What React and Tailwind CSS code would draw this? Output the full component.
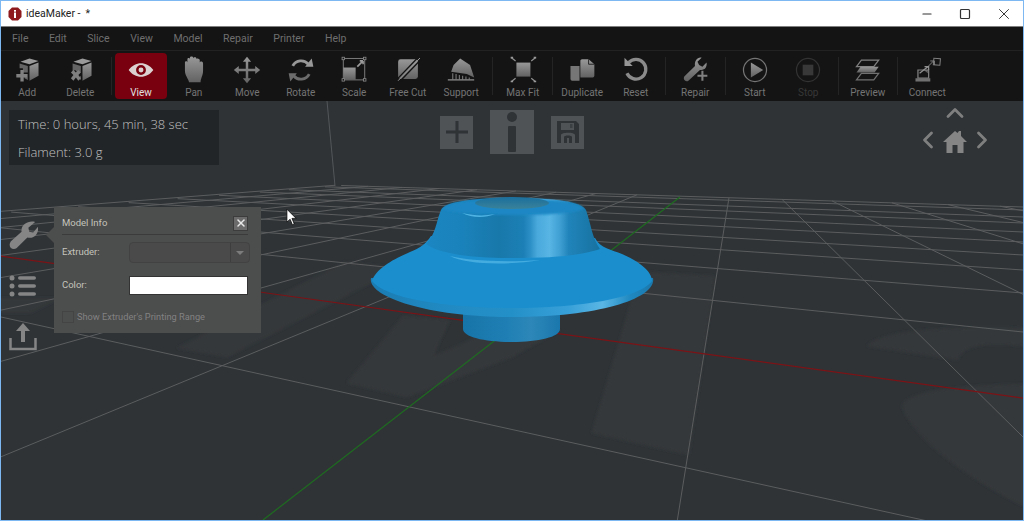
import { Minus, Square, X, ChevronUp, ChevronLeft, ChevronRight } from 'lucide-react';

const uiFont = { fontFamily: 'Roboto, "Open Sans", sans-serif' };

// floor grid, measured from the two vanishing points of the perspective
const VP_X = [-753, 151];
const VP_Y = [736, 154];
const rightEdgeYs = [207, 210, 217, 223, 232, 242, 255, 270, 293, 332, 542];
const farEdgeXs = [335, 368, 402, 439, 477, 516, 556, 596, 637, 729, 782, 832, 892, 948, 1000];

const xLines = rightEdgeYs.map(y => {
  const s = (y - VP_X[1]) / (1023 - VP_X[0]);
  // start where the line meets the far left edge
  const x0 = (213 - VP_X[1] - s * -VP_X[0]) / (s + 0.0806);
  return { x1: x0, y1: VP_X[1] + s * (x0 - VP_X[0]), x2: 1030, y2: VP_X[1] + s * (1030 - VP_X[0]) };
});

const yLines = farEdgeXs.map(x => {
  const y = 151 + 0.0315 * (x + 753);
  const dx = x - VP_Y[0];
  const dy = y - VP_Y[1];
  return { x1: x, y1: y, x2: x + dx * 40, y2: y + dy * 40 };
});

function Scene() {
  return (
    <svg viewBox="1 101 1022 419" className="absolute inset-0 w-full h-full">
      <defs>
        <filter id="soft"><feGaussianBlur stdDeviation="1.6" /></filter>
        <filter id="softer"><feGaussianBlur stdDeviation="0.8" /></filter>
        <linearGradient id="cone" x1="0" x2="1" y1="0" y2="0">
          <stop offset="0" stopColor="#1b86c2" />
          <stop offset="0.2" stopColor="#1a82bb" />
          <stop offset="0.42" stopColor="#1878aa" />
          <stop offset="0.56" stopColor="#1c80b6" />
          <stop offset="0.6" stopColor="#2c90c6" />
          <stop offset="0.64" stopColor="#4aa9dc" />
          <stop offset="0.71" stopColor="#58b5e4" />
          <stop offset="0.77" stopColor="#3f9fd3" />
          <stop offset="0.82" stopColor="#2084ba" />
          <stop offset="1" stopColor="#17719f" />
        </linearGradient>
        <linearGradient id="rim" x1="0" x2="1" y1="0" y2="0">
          <stop offset="0" stopColor="#1a7cb2" />
          <stop offset="0.25" stopColor="#2189c1" />
          <stop offset="0.5" stopColor="#2490c8" />
          <stop offset="0.7" stopColor="#38a0d8" />
          <stop offset="0.82" stopColor="#5ab6e4" />
          <stop offset="0.92" stopColor="#1f88c0" />
          <stop offset="1" stopColor="#1a78ac" />
        </linearGradient>
        <linearGradient id="stem" x1="0" x2="1" y1="0" y2="0">
          <stop offset="0" stopColor="#1774a8" />
          <stop offset="0.45" stopColor="#1f7fb4" />
          <stop offset="0.7" stopColor="#2d87b8" />
          <stop offset="1" stopColor="#1a77ad" />
        </linearGradient>
        <linearGradient id="hole" x1="0" x2="0" y1="0" y2="1">
          <stop offset="0" stopColor="#1a6f9e" />
          <stop offset="1" stopColor="#3a8299" />
        </linearGradient>
      </defs>

      {/* faint logo printed on the bed */}
      <g fill="#36393b" filter="url(#soft)">
        <path d="M177 348 L227 357 L400 268 L345 262 Z" />
        <path d="M0 298 L60 298 L30 313 L0 313 Z" />
        <path d="M347 383 L407 397 L512 357 L560 330 L512 318 L460 345 L433 356 L450 320 L403 316 Z" />
        <path d="M592 433 L689 455 L715 276 L640 272 Z" />
        <path d="M867 346 C 880 332 930 326 1024 328 L1024 346 C 990 342 962 344 958 360 Z" />
        <path d="M902 407 C 905 392 950 386 1024 384 L1024 506 C 970 480 915 440 902 407 Z" />
      </g>

      <line x1="327" y1="101" x2="335" y2="186" stroke="#54575a" />
      <g stroke="#5b5d5e" strokeWidth="1" fill="none">
        {xLines.map((l, i) => <line key={i} {...l} />)}
        {yLines.map((l, i) => <line key={i} {...l} />)}
      </g>
      <line x1="0" y1="256" x2="1030" y2="399" stroke="#7c1316" strokeWidth="1.2" />
      <line x1="263" y1="520" x2="680" y2="197" stroke="#1e6c20" strokeWidth="1.2" />

      {/* the model */}
      <path d="M463 308 V329 C463 337 485 342 512 342 C538 342 560 337 560 329 V308 Z" fill="url(#stem)" />
      <path d="M371 278 C367 296 425 317 512 317 C600 317 657 298 653 278 Z" fill="url(#rim)" />
      <path d="M372 281 C376 268 396 258 410 252 C420 248 426 244 431 236 L595 238 C600 248 612 250 622 254 C636 260 652 270 652 281 C640 298 580 308 512 308 C445 308 385 298 372 281 Z" fill="#1b8fce" />
      <path d="M426 244 C436 234 436 222 441 210 C445 202 470 198 513 198 C556 198 582 202 586 210 C591 224 592 238 600 249 C580 256 550 258 512 258 C470 258 440 254 426 244 Z" fill="url(#cone)" />
      <path d="M443 209 C447 202 470 199 513 199 C556 199 580 202 584 209 C575 213 550 215 513 215 C478 215 452 213 443 209 Z" fill="#1b87c4" filter="url(#softer)" />
      <path d="M462 213 C475 216 485 216 495 214 C485 218 472 218 462 213 Z" fill="#4fb4e4" />
      <path d="M450 256 C465 260 500 263 540 260 C505 266 465 264 450 256 Z" fill="#45ace0" />
      <ellipse cx="512" cy="203" rx="37" ry="6" fill="url(#hole)" />
    </svg>
  );
}

const G = 'url(#btnGrad)';
const iconBox = 'w-[28px] h-[28px]';

const AddIcon = () => (
  <svg viewBox="0 -1 34 34" className={iconBox}>
    <path d="M9 6 L20 2 L31 5 L20 9 Z" fill="#9a9a9a" />
    <path d="M8 8 L18 11 V19 H12 V14 H8 Z M18 21 V28 L14 26 V21 Z" fill="#646464" />
    <path d="M20 11 L31 7 V23 L20 29 Z" fill={G} />
    <path d="M9 16 V21 H4 V25 H9 V30 H13 V25 H17 V21 H13 V16 Z" fill="#808080" />
  </svg>
);
const DeleteIcon = () => (
  <svg viewBox="0 -1 34 34" className={iconBox}>
    <path d="M9 6 L20 2 L31 5 L20 9 Z" fill="#9a9a9a" />
    <path d="M8 8 L18 11 V19 H14 L11 16 L8 18 Z M18 23 V28 L15 26 Z" fill="#646464" />
    <path d="M20 11 L31 7 V23 L20 29 Z" fill={G} />
    <path d="M6 19 L9 16 L12 19 L15 16 L18 19 L15 22 L18 26 L15 29 L12 25 L9 29 L6 26 L9 22 Z" fill="#808080" />
  </svg>
);
const ViewIcon = () => (
  <svg viewBox="0 -6 34 34" className={iconBox}>
    <path fillRule="evenodd" d="M2 11 C10 0 24 0 32 11 C24 22 10 22 2 11 Z M17 5 A6 6 0 1 0 17 17 A6 6 0 1 0 17 5 Z" fill="#dcd0d0" />
    <circle cx="17" cy="11" r="3" fill="#dcd0d0" />
  </svg>
);
const PanIcon = () => (
  <svg viewBox="0 0 34 34" className={iconBox}>
    <path d="M6 8 C6 6 9 6 9 8 V4 C9 2 12 2 12 4 V2 C12 0 16 0 16 2 V3 C16 1 20 1 20 3 V4 C20 2 24 3 24 5 V8 C24 6 28 6 28 9 V18 C28 24 25 27 25 32 H11 C10 27 6 24 6 18 Z" fill={G} />
  </svg>
);
const MoveIcon = () => (
  <svg viewBox="0 0 34 34" className={iconBox}>
    <path d="M17 1 L22 7 H18.5 V15.5 H27 V12 L33 17 L27 22 V18.5 H18.5 V27 H22 L17 33 L12 27 H15.5 V18.5 H7 V22 L1 17 L7 12 V15.5 H15.5 V7 H12 Z" fill={G} />
  </svg>
);
const RotateIcon = () => (
  <svg viewBox="0 0 34 34" className={iconBox}>
    <path d="M7 12 A11.5 11.5 0 0 1 26 10" fill="none" stroke="#989898" strokeWidth="3.5" />
    <path d="M22 13 L32 13 L30 3 Z" fill="#989898" />
    <path d="M27 22 A11.5 11.5 0 0 1 8 24" fill="none" stroke="#6c6c6c" strokeWidth="3.5" />
    <path d="M12 21 L2 21 L4 31 Z" fill="#6c6c6c" />
  </svg>
);
const ScaleIcon = () => (
  <svg viewBox="0 0 34 34" className={iconBox}>
    <rect x="4" y="3" width="26" height="26" fill="none" stroke="#7c7c7c" strokeWidth="1.2" />
    <path d="M4 14 H19 V29 H4 Z" fill={G} />
    <path d="M21 13 L28 6 M28 6 H24 M28 6 V10" stroke="#9a9a9a" strokeWidth="2" fill="none" />
    {[[4, 3], [30, 3], [4, 29], [30, 29]].map(([x, y]) => (
      <rect key={x + '-' + y} x={x - 1.5} y={y - 1.5} width="3" height="3" fill="#141414" stroke="#8a8a8a" />
    ))}
  </svg>
);
const FreeCutIcon = () => (
  <svg viewBox="0 0 34 34" className={iconBox}>
    <rect x="5" y="4" width="24" height="24" rx="3" fill={G} />
    <path d="M30 1 L3 29 M33 4 L7 31" stroke="#141414" strokeWidth="1.6" />
    <path d="M31.5 2.5 L5 30" stroke="#9a9a9a" strokeWidth="1.2" />
  </svg>
);
const SupportIcon = () => (
  <svg viewBox="0 0 34 34" className={iconBox}>
    <path d="M8 11 L16 3 L28 11 L33 26 L24 22 L5 19 Z" fill={G} />
    <path d="M1 29 H33" stroke="#8a8a8a" strokeWidth="1.6" />
    <path d="M7 21 V29 M11 22 V29 M15 23 V29 M19 24 V29 M23 25 V29 M27 26 V29" stroke="#7a7a7a" strokeWidth="1.3" />
  </svg>
);
const MaxFitIcon = () => (
  <svg viewBox="0 0 34 34" className={iconBox}>
    <rect x="9" y="8" width="17" height="17" fill={G} />
    <path d="M3 2 L8 6 M32 2 L27 6 M3 31 L8 27 M32 31 L27 27" stroke="#8f8f8f" strokeWidth="1.5" />
    <path d="M2 1 H5 V3 H2 Z M30 1 H33 V3 H30 Z M2 30 H5 V32 H2 Z M30 30 H33 V32 H30 Z" fill="#9a9a9a" />
  </svg>
);
const DuplicateIcon = () => (
  <svg viewBox="0 0 34 34" className={iconBox}>
    <path d="M3 12 H14 V30 H5 C4 30 3 29 3 28 Z" fill="#767676" />
    <path d="M15 6 C15 5 16 4 17 4 H25 L32 10 V24 C32 25 31 26 30 26 H15 Z" fill={G} />
    <path d="M25 4 V10 H32" stroke="#141414" fill="none" />
  </svg>
);
const ResetIcon = () => (
  <svg viewBox="0 0 34 34" className={iconBox}>
    <path d="M8 8 A12 12 0 1 1 6 21" fill="none" stroke="#8a8a8a" strokeWidth="4" />
    <path d="M3 2 L13 12 H3 Z" fill="#969696" />
  </svg>
);
const RepairIcon = () => (
  <svg viewBox="0 0 34 34" className={iconBox}>
    <path d="M25 2 L20 7 L22 11 L26 13 L31 8 C32 13 29 18 23 17 L9 30 C6 32 2 29 4 25 L17 12 C16 6 20 1 25 2 Z" fill={G} />
    <path d="M26 18 V30 M20 24 H32" stroke="#808080" strokeWidth="2.5" />
  </svg>
);
const StartIcon = () => (
  <svg viewBox="0 -2 34 34" className={iconBox}>
    <circle cx="17" cy="15" r="14" fill="none" stroke="#757575" strokeWidth="1.5" />
    <path d="M12 6 L27 15 L12 24 Z" fill={G} />
  </svg>
);
const StopIcon = () => (
  <svg viewBox="0 -2 34 34" className={iconBox}>
    <circle cx="17" cy="15" r="14" fill="none" stroke="#333333" strokeWidth="1.5" />
    <rect x="10.5" y="8.5" width="13" height="13" fill="#383838" />
  </svg>
);
const PreviewIcon = () => (
  <svg viewBox="0 -2 34 34" className={iconBox}>
    <path d="M9 3 H30 L24 11 H3 Z" fill="none" stroke="#808080" strokeWidth="1.5" />
    <path d="M8 11 H30 L25 18 H3 Z" fill={G} />
    <path d="M9 19 H30 L24 27 H3 Z" fill="none" stroke="#707070" strokeWidth="1.5" />
  </svg>
);
const ConnectIcon = () => (
  <svg viewBox="0 -2 34 34" className={iconBox}>
    <rect x="25" y="1" width="8" height="8" fill="none" stroke="#808080" strokeWidth="1.2" transform="rotate(5 29 5)" />
    <path d="M16 13 L25 4 M21 4 H26 V9" stroke="#808080" strokeWidth="1.2" fill="none" />
    <path d="M6 15 H18 V19 L13 15 Z" fill="#606060" />
    <path d="M6 15 H19 V25 H6 Z" fill="none" stroke="#808080" strokeWidth="1.5" />
    <path d="M8 19 L18 11 M14 11 H19 V15" stroke="#909090" strokeWidth="1.5" fill="none" />
    <path d="M3 25 H21 V29 H3 Z" fill="#707070" />
  </svg>
);

const WrenchIcon = () => (
  <svg viewBox="0 0 30 30" className="w-[29px] h-[29px]">
    <path d="M27 1 L20 7 L21 11 L25 12 L30 6 C31 13 26 19 19 17 L8 28 C4 31 -2 27 2 21 L13 11 C12 4 20 -1 27 1 Z" fill="#858585" />
  </svg>
);

const tools = [
  { label: 'Add', Icon: AddIcon, w: 'w-[52.5px]' },
  { label: 'Delete', Icon: DeleteIcon, w: 'w-[53.5px]' },
  { sep: 'w-[8px]' },
  { label: 'View', Icon: ViewIcon, w: 'w-[52px]', active: true },
  { label: 'Pan', Icon: PanIcon, w: 'w-[53.5px]' },
  { label: 'Move', Icon: MoveIcon, w: 'w-[53.5px]' },
  { label: 'Rotate', Icon: RotateIcon, w: 'w-[53.5px]' },
  { label: 'Scale', Icon: ScaleIcon, w: 'w-[53.5px]' },
  { label: 'Free Cut', Icon: FreeCutIcon, w: 'w-[53.5px]' },
  { label: 'Support', Icon: SupportIcon, w: 'w-[53.5px]' },
  { sep: 'w-[8px]' },
  { label: 'Max Fit', Icon: MaxFitIcon, w: 'w-[53.5px]' },
  { sep: 'w-[6px]' },
  { label: 'Duplicate', Icon: DuplicateIcon, w: 'w-[53.5px]' },
  { label: 'Reset', Icon: ResetIcon, w: 'w-[53.5px]' },
  { sep: 'w-[6px]' },
  { label: 'Repair', Icon: RepairIcon, w: 'w-[53.5px]' },
  { sep: 'w-[6px]' },
  { label: 'Start', Icon: StartIcon, w: 'w-[53.5px]' },
  { label: 'Stop', Icon: StopIcon, w: 'w-[53.5px]', disabled: true },
  { sep: 'w-[6px]' },
  { label: 'Preview', Icon: PreviewIcon, w: 'w-[53.5px]' },
  { sep: 'w-[6px]' },
  { label: 'Connect', Icon: ConnectIcon, w: 'w-[53.5px]' },
];

const menus = ['File', 'Edit', 'Slice', 'View', 'Model', 'Repair', 'Printer', 'Help'];

function ToolButton({ tool }) {
  const { label, Icon, w, active, disabled } = tool;
  return (
    <div className={`${w} h-[46px] shrink-0 flex flex-col items-center rounded ${active ? 'bg-[#79000e]' : ''}`}>
      <div className="h-[28px] mt-[3px]"><Icon /></div>
      <span className={`text-[10px] leading-[11px] mt-[3px] ${active ? 'text-[#e0e0e0]' : disabled ? 'text-[#383838]' : 'text-[#747474]'}`}>
        {label}
      </span>
    </div>
  );
}

function ModelInfo() {
  return (
    <div className="absolute left-[53px] top-[106px] w-[207px] h-[126px] bg-[#4c4d4d] px-2 pt-[7px] text-[9.5px] text-[#c4c4bc]">
      <div className="absolute left-[-8px] top-[20px] w-0 h-0 border-y-[8px] border-y-transparent border-r-[8px] border-r-[#4c4d4d]" />
      <div className="flex items-center justify-between h-[18px] pr-[5px]">
        <span>Model Info</span>
        <div className="w-[15px] h-[15px] bg-[#6b6b6b] border border-[#3c3c3c] flex items-center justify-center">
          <X size={12} strokeWidth={3} className="text-[#e8e8e8]" />
        </div>
      </div>
      <div className="h-px bg-[#3b3b3b] mt-[2px] mr-[5px]" />
      <div className="flex items-center mt-[7px] h-[21px]">
        <span className="w-[67px]">Extruder:</span>
        <div className="w-[121px] h-[21px] bg-[#4a4a4a] border border-[#424242] rounded-sm flex justify-end">
          <div className="w-[19px] border-l border-[#3e3e3e] flex items-center justify-center">
            <div className="w-0 h-0 border-x-[4px] border-x-transparent border-t-[4px] border-t-[#7c7c7c]" />
          </div>
        </div>
      </div>
      <div className="flex items-center mt-[13px] h-[19px]">
        <span className="w-[67px]">Color:</span>
        <div className="w-[119px] h-[19px] bg-white border border-[#333333]" />
      </div>
      <div className="flex items-center mt-[15px]">
        <div className="w-[12px] h-[12px] border border-[#444444] mr-[3px]" />
        <span className="text-[9.25px] text-[#828282]">Show Extruder's Printing Range</span>
      </div>
    </div>
  );
}

export default function App() {
  return (
    <div className="w-[1024px] h-[521px] flex flex-col border border-[#7db8f2] bg-white overflow-hidden" style={uiFont}>
      <svg className="absolute w-0 h-0">
        <defs>
          <linearGradient id="btnGrad" x1="0" x2="0" y1="0" y2="1">
            <stop offset="0" stopColor="#989898" />
            <stop offset="1" stopColor="#626262" />
          </linearGradient>
        </defs>
      </svg>

      {/* title bar */}
      <div className="h-[26px] shrink-0 flex items-center bg-white border-b border-[#7f7f7f] text-[10.5px] text-[#222222]">
        <svg viewBox="0 0 14 14" className="w-[14px] h-[14px] ml-[7px] mr-[4px]">
          <path d="M4 0.5 H10 L13.5 4 V10 L10 13.5 H4 L0.5 10 V4 Z" fill="#8e1a1d" />
          <rect x="6" y="5.5" width="2" height="5.5" fill="#fff" />
          <rect x="6" y="3" width="2" height="1.7" fill="#fff" />
        </svg>
        <span>ideaMaker -</span>
        <span className="ml-[5px]">*</span>
        <div className="ml-auto flex items-center text-[#333333]">
          <Minus size={14} strokeWidth={1.8} className="mr-[25px]" />
          <Square size={12} strokeWidth={2.4} className="mr-[24px]" />
          <X size={18} strokeWidth={1.3} className="mr-[10px]" />
        </div>
      </div>

      {/* menu bar */}
      <div className="h-[24px] shrink-0 flex items-center gap-[20.5px] pl-[11px] bg-[#141414] border-b border-[#222222] text-[10.5px] text-[#6f6f6f]">
        {menus.map(m => <span key={m}>{m}</span>)}
      </div>

      {/* toolbar */}
      <div className="h-[50px] shrink-0 flex items-center bg-[#141414]">
        {tools.map((t, i) => t.sep ? (
          <div key={i} className={`${t.sep} h-[38px] shrink-0 flex justify-center`}>
            <div className="w-px h-full bg-[#242424]" />
          </div>
        ) : (
          <ToolButton key={t.label} tool={t} />
        ))}
      </div>

      {/* viewport */}
      <div className="relative flex-1 bg-[#2f3336] overflow-hidden">
        <Scene />

        <div className="absolute left-[8px] top-[9px] w-[210px] h-[55px] bg-[#212528] pl-[9px] text-[13px] font-light text-[#c0c0c0]" style={{ fontFamily: '"Open Sans", sans-serif' }}>
          <div className="h-[28px] leading-[28px]">Time: 0 hours, 45 min, 38 sec</div>
          <div className="h-[27px] leading-[28px]">Filament: 3.0 g</div>
        </div>

        {/* quick actions */}
        <div className="absolute left-[439px] top-[9px] h-[44px] flex items-center">
          <div className="w-[33px] h-[33px] bg-[#4f5356] flex items-center justify-center">
            <svg viewBox="0 0 24 24" className="w-[24px] h-[24px]"><path d="M1 10.5 H10.5 V1 H13.5 V10.5 H23 V13.5 H13.5 V23 H10.5 V13.5 H1 Z" fill="#2f3336" /></svg>
          </div>
          <div className="w-[44px] h-[44px] ml-[17px] bg-[#4f5356] flex items-center justify-center">
            <svg viewBox="0 0 44 44" className="w-[44px] h-[44px]">
              <circle cx="22" cy="7" r="5" fill="#2f3336" />
              <rect x="18" y="16" width="8" height="26" rx="1" fill="#2f3336" />
            </svg>
          </div>
          <div className="w-[33px] h-[33px] ml-[17px] bg-[#4f5356] flex items-center justify-center">
            <svg viewBox="0 0 24 24" className="w-[24px] h-[24px]">
              <path fillRule="evenodd" d="M1 1 H20 L23 4 V23 H1 Z M5 3 V10 H18 V3 Z M5 23 H8 V17 C8 15 16 15 16 17 V23 H19 V15 C19 12 5 12 5 15 Z M11 23 H13 V18 H11 Z" fill="#2f3336" />
              <rect x="14" y="4" width="2.5" height="4" fill="#2f3336" opacity="0.6" />
            </svg>
          </div>
        </div>

        {/* camera nav */}
        <ChevronUp size={28} strokeWidth={2.4} className="absolute left-[940px] top-[-2px] text-[#7f7f7f]" />
        <ChevronLeft size={28} strokeWidth={2.4} className="absolute left-[913px] top-[25px] text-[#7f7f7f]" />
        <ChevronRight size={28} strokeWidth={2.4} className="absolute left-[967px] top-[25px] text-[#7f7f7f]" />
        <svg viewBox="0 0 24 24" className="absolute left-[942px] top-[27px] w-[24px] h-[26px]">
          <path d="M0 13 L12 2 L14.5 4 L16 2 H18 V7 L24 13 H20.5 V24 H14.5 V16 H9.5 V24 H3.5 V13 Z" fill="#858585" />
        </svg>

        {/* side tabs */}
        <div className="absolute left-[8px] top-[120px]"><WrenchIcon /></div>
        <svg viewBox="0 0 28 22" className="absolute left-[8px] top-[174px] w-[28px] h-[22px]">
          <circle cx="3" cy="3" r="2.5" fill="#858585" />
          <circle cx="3" cy="11" r="2.5" fill="#858585" />
          <circle cx="3" cy="19" r="2.5" fill="#858585" />
          <rect x="9" y="1.2" width="18" height="3.6" rx="1.8" fill="#858585" />
          <rect x="9" y="9.2" width="18" height="3.6" rx="1.8" fill="#858585" />
          <rect x="9" y="17.2" width="18" height="3.6" rx="1.8" fill="#858585" />
        </svg>
        <svg viewBox="0 0 28 28" className="absolute left-[8px] top-[222px] w-[28px] h-[28px]">
          <path d="M14 0 L21 8 H16 V19 H12 V8 H7 Z" fill="#858585" />
          <path d="M1.5 15 V26 H26.5 V15" fill="none" stroke="#858585" strokeWidth="2.5" />
        </svg>

        <ModelInfo />

        {/* mouse pointer */}
        <svg viewBox="0 0 12 19" className="absolute left-[285px] top-[107px] w-[11px] h-[18px]">
          <path d="M1 1 L1 15 L4.5 12 L7 18 L9 17 L6.5 11 L11 11 Z" fill="#ffffff" stroke="#000000" strokeWidth="0.8" />
        </svg>
      </div>
    </div>
  );
}
